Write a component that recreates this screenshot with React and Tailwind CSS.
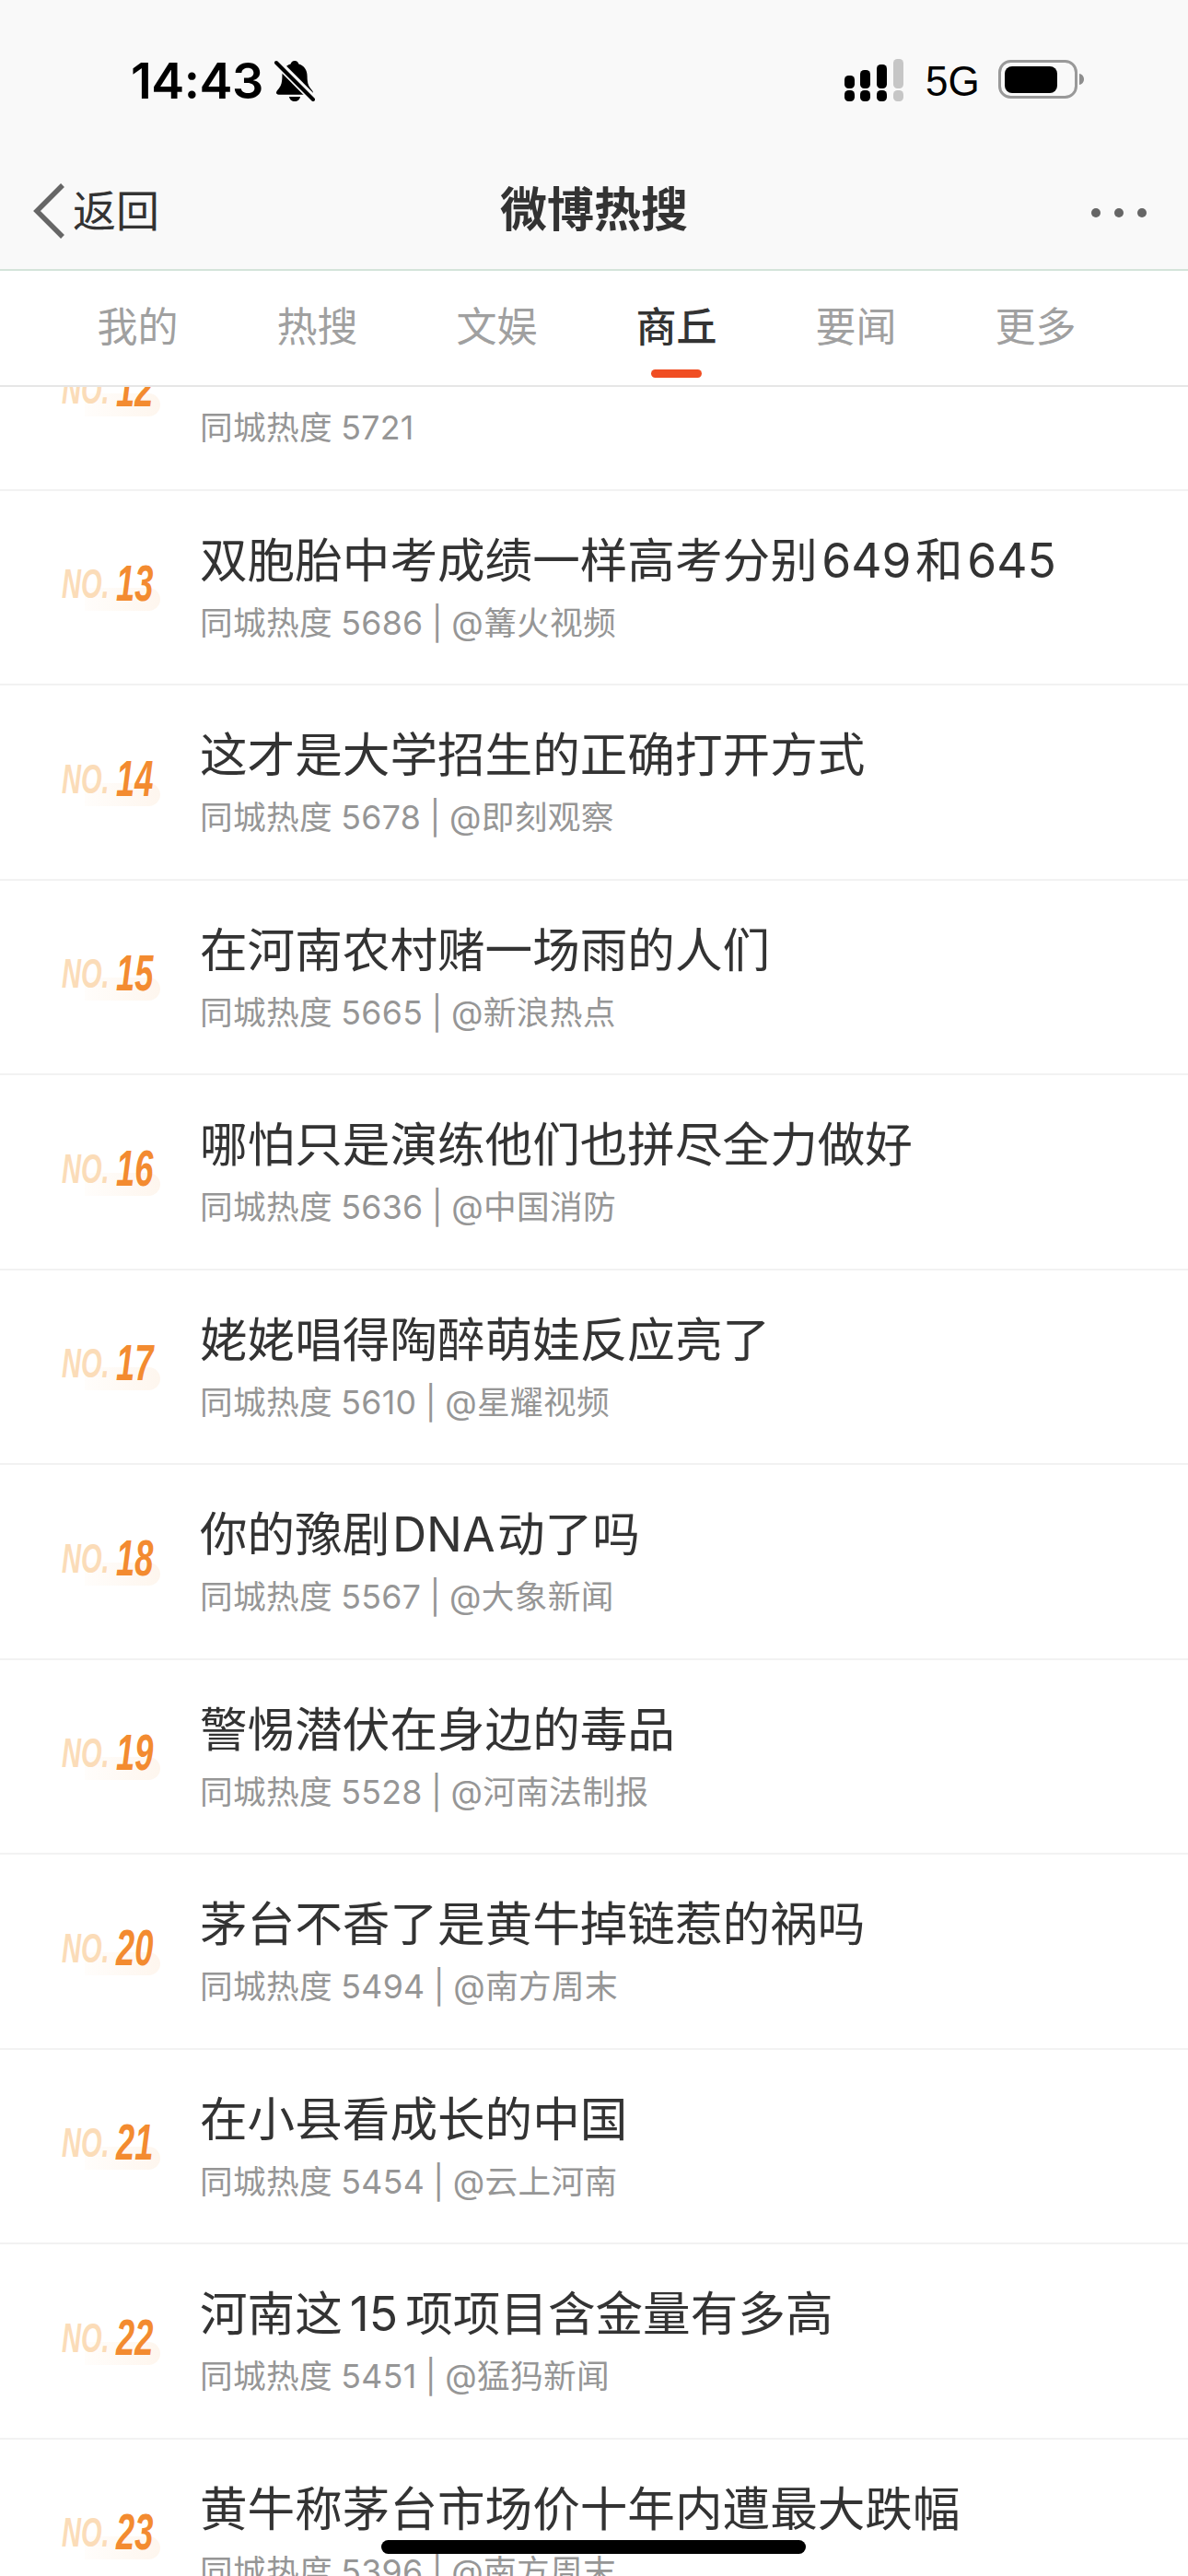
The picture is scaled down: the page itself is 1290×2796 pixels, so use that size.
const rows = [
  { no: 12, title: "\u00a0", sub: "同城热度 5721" },
  { no: 13, title: "双胞胎中考成绩一样高考分别 649 和 645", sub: "同城热度 5686 | @篝火视频", ws: "[word-spacing:-10px]" },
  { no: 14, title: "这才是大学招生的正确打开方式", sub: "同城热度 5678 | @即刻观察" },
  { no: 15, title: "在河南农村赌一场雨的人们", sub: "同城热度 5665 | @新浪热点" },
  { no: 16, title: "哪怕只是演练他们也拼尽全力做好", sub: "同城热度 5636 | @中国消防" },
  { no: 17, title: "姥姥唱得陶醉萌娃反应亮了", sub: "同城热度 5610 | @星耀视频" },
  { no: 18, title: "你的豫剧 DNA 动了吗", sub: "同城热度 5567 | @大象新闻", ws: "[word-spacing:-12px]" },
  { no: 19, title: "警惕潜伏在身边的毒品", sub: "同城热度 5528 | @河南法制报" },
  { no: 20, title: "茅台不香了是黄牛掉链惹的祸吗", sub: "同城热度 5494 | @南方周末" },
  { no: 21, title: "在小县看成长的中国", sub: "同城热度 5454 | @云上河南" },
  { no: 22, title: "河南这 15 项项目含金量有多高", sub: "同城热度 5451 | @猛犸新闻", ws: "[word-spacing:-6.5px]" },
  { no: 23, title: "黄牛称茅台市场价十年内遭最大跌幅", sub: "同城热度 5396 | @南方周末" },
];

const tabs = ["我的", "热搜", "文娱", "商丘", "要闻", "更多"];

function Rank({ no }) {
  return (
    <div className="relative w-[150px] h-[50px] shrink-0 ml-[67px] font-['Liberation_Sans',sans-serif] font-bold italic">
      <div className="absolute left-[25px] top-[26px] w-[82px] h-[25px] rounded-r-full bg-gradient-to-r from-[#fffdfb] to-[#fef6ee]" />
      <span className="absolute left-0 top-[-3px] text-[44px] leading-[50px] text-[#fbdcb8] origin-left scale-x-[0.66]">NO.</span>
      <span className="absolute left-[59px] top-[-9px] text-[55px] leading-[60px] text-[#f38b30] origin-left scale-x-[0.66]">{no}</span>
    </div>
  );
}

function Row({ row }) {
  return (
    <div className="h-[211.5px] border-b-2 border-[#f2f2f2] flex items-center">
      <Rank no={row.no} />
      <div className="flex flex-col">
        <div className={`text-[51.6px] leading-[68px] text-[#333333] whitespace-nowrap ${row.ws || ""}`}>{row.title}</div>
        <div className="text-[35.7px] leading-[50px] mt-[9px] text-[#969696] whitespace-nowrap tracking-[0.3px] [word-spacing:-1px]">{row.sub}</div>
      </div>
    </div>
  );
}

export default function App() {
  return (
    <div className="relative w-[1290px] h-[2796px] overflow-hidden bg-white font-['Inter','Noto_Sans_CJK_SC',sans-serif]">
      <header className="relative z-10 bg-white">
        <div className="h-[294px] bg-[#f9f9f9] border-b-2 border-[#d4e4da] relative">
          <div className="h-[176px] flex items-start pt-[59px] pl-[142px] pr-[112px]">
            <span className="text-[54px] leading-[58px] font-semibold text-black tracking-[-0.5px]">14:43</span>
            <svg className="ml-[12px] mt-[6px]" width="44" height="46" viewBox="0 0 44 46">
              <path d="M22 1c2.400 0 4 1.600 4.400 3.600C32.600 6.400 35.600 11.600 35.600 18c0 6 1 9.500 3.200 12.500 1.600 2 3.200 3.600 3.200 5 0 1.400-1 2.200-2.600 2.200H4.600C3 37.700 2 36.900 2 35.500c0-1.400 1.600-3 3.200-5 2.200-3 3.200-6.500 3.200-12.500 0-6.400 3-11.600 9.200-13.400C18 2.600 19.600 1 22 1z" fill="#000" />
              <path d="M16 40h12c-.4 3-3 5-6 5s-5.600-2-6-5z" fill="#000" />
              <path d="M2 2l40 40" stroke="#f9f9f9" strokeWidth="9" />
              <path d="M2 3l40 40" stroke="#000" strokeWidth="4" strokeLinecap="round" />
            </svg>
            <div className="ml-auto flex items-start">
              <svg className="mt-[5px]" width="66" height="46" viewBox="0 0 66 46">
                <rect x="1" y="18" width="11" height="14" rx="4.500" fill="#000" />
                <rect x="18" y="12" width="11" height="20" rx="4.500" fill="#000" />
                <rect x="36" y="6" width="11" height="26" rx="4.500" fill="#000" />
                <rect x="54" y="0" width="11" height="32" rx="4.500" fill="#c6c6c6" />
                <rect x="1" y="34" width="11" height="12" rx="4.500" fill="#000" />
                <rect x="18" y="34" width="11" height="12" rx="4.500" fill="#000" />
                <rect x="36" y="34" width="11" height="12" rx="4.500" fill="#000" />
                <rect x="54" y="34" width="11" height="12" rx="4.500" fill="#c6c6c6" />
              </svg>
              <span className="ml-[23px] w-[59px] text-[44px] leading-[58px] text-black font-['Liberation_Sans',sans-serif] scale-y-[1.06]">5G</span>
              <svg className="ml-[20px] mt-[6px]" width="94" height="42" viewBox="0 0 94 42">
                <rect x="1.500" y="1.500" width="83" height="39" rx="12" fill="none" stroke="#999999" strokeWidth="3" />
                <rect x="7" y="7" width="57" height="29" rx="8" fill="#000" />
                <path d="M88 15c3 .5 5 3 5 6s-2 5.500-5 6z" fill="#8e8e8e" />
              </svg>
            </div>
          </div>
          <div className="h-[116px] flex items-center justify-between relative">
            <div className="flex items-center pb-[10px]">
              <svg className="ml-[34px]" width="38" height="62" viewBox="0 0 38 62">
                <path d="M34 3L6 31l28 28" fill="none" stroke="#666666" strokeWidth="5.500" />
              </svg>
              <span className="ml-[7px] text-[47px] leading-[60px] text-[#333333]">返回</span>
            </div>
            <div className="absolute inset-x-0 top-[21px] text-center text-[51px] leading-[62px] font-bold text-[#333333]">微博热搜</div>
            <div className="flex gap-[15px] pr-[45px] pb-[6px]">
              <span className="w-[10px] h-[10px] rounded-full bg-[#666666]" />
              <span className="w-[10px] h-[10px] rounded-full bg-[#666666]" />
              <span className="w-[10px] h-[10px] rounded-full bg-[#666666]" />
            </div>
          </div>
        </div>
        <nav className="h-[126px] border-b-2 border-[#e6e6e6] flex pl-[52px] pr-[68px]">
          {tabs.map((t) => (
            <div key={t} className="relative w-[195px] text-center pt-[32px]">
              <span className={t === "商丘" ? "text-[44px] leading-[58px] font-medium text-[#333333]" : "text-[44px] leading-[58px] text-[#a0a0a0]"}>{t}</span>
              {t === "商丘" && <span className="absolute left-[70px] top-[107px] w-[55px] h-[9px] rounded-full bg-[#f04e23]" />}
            </div>
          ))}
        </nav>
      </header>
      <main className="-mt-[99px]">
        {rows.map((r) => (
          <Row key={r.no} row={r} />
        ))}
      </main>
      <div className="absolute left-[414px] top-[2757px] w-[461px] h-[15px] rounded-full bg-black z-20" />
    </div>
  );
}
